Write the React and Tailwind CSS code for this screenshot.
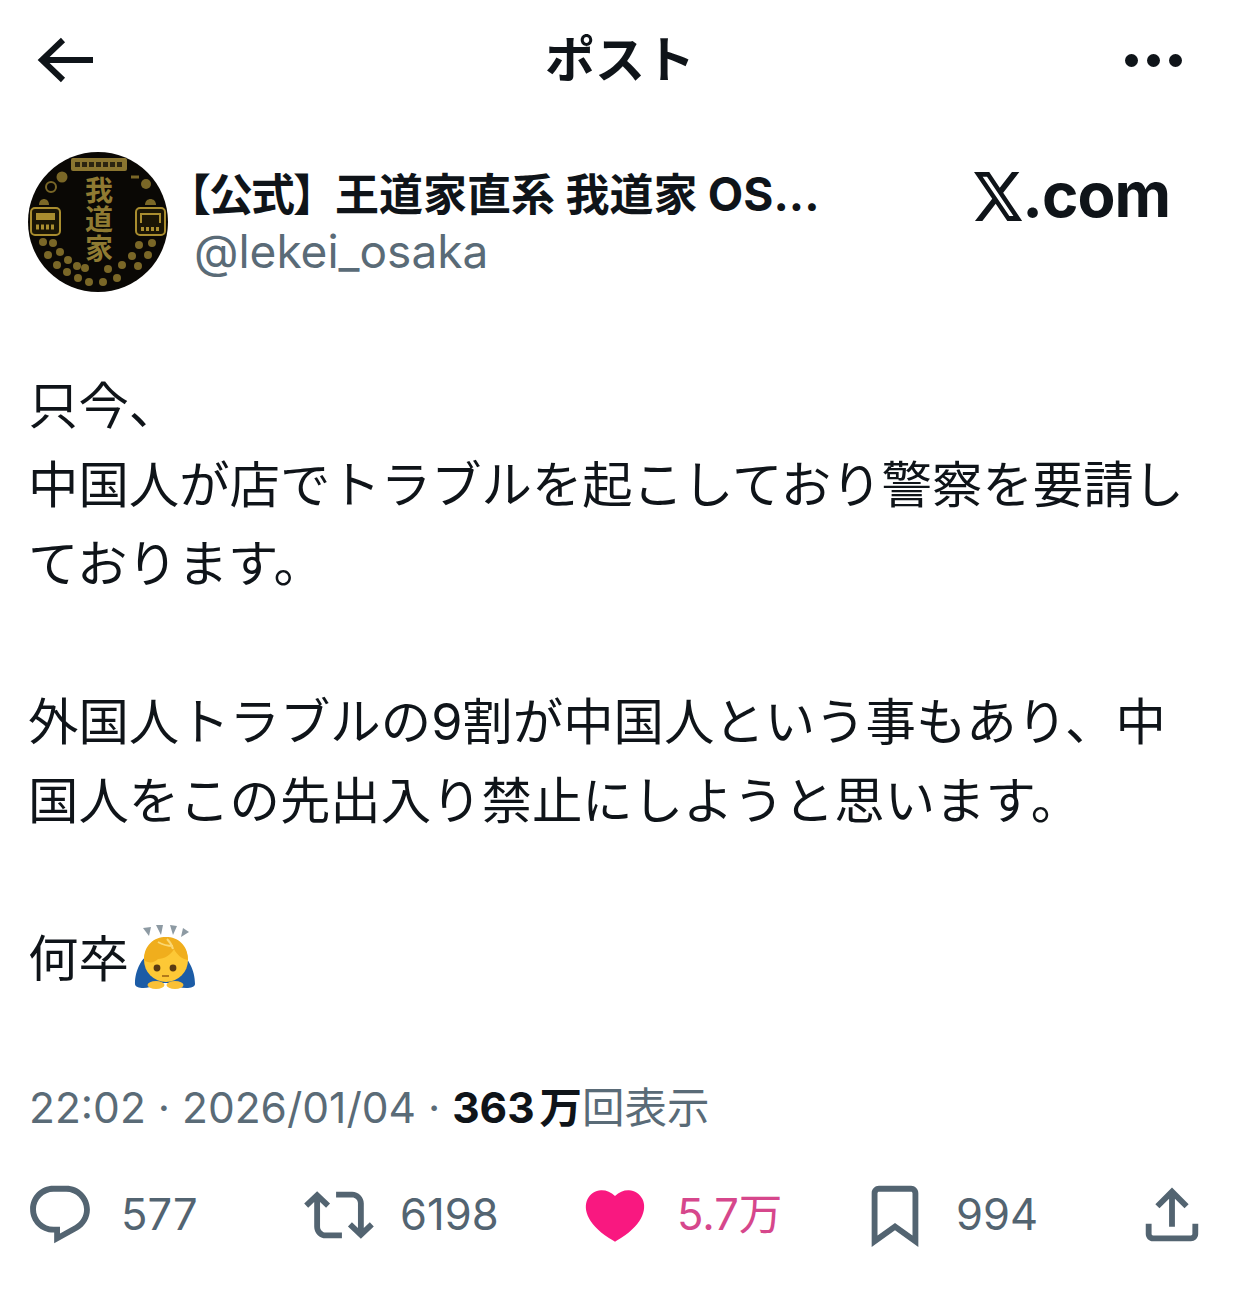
const CJK = '[font-family:Inter,"Noto_Sans_CJK_JP",sans-serif]';

function Avatar() {
  const gold = "#a98d2f";
  const dim = "#7a6727";
  const beads = [
    [15, 90], [25, 91], [20, 103], [32, 100], [29, 113], [40, 108], [49, 114], [57, 116], [39, 120], [50, 126], [61, 130],
    [75, 130], [89, 126], [80, 117], [94, 113], [110, 114], [104, 104], [120, 103], [111, 93], [124, 91],
  ];
  return (
    <svg width="140" height="140" viewBox="0 0 140 140" className="shrink-0">
      <circle cx="70" cy="70" r="70" fill="#0a0805" />
      <rect x="43" y="6" width="56" height="13" rx="2" fill="#8a7530" />
      <path d="M47 12.5h48" stroke="#2b2410" strokeWidth="5" strokeDasharray="5 2" />
      <text x="71" y="24" writingMode="vertical-rl" letterSpacing="1" fontSize="28" fontWeight="700" fill="#8f7a32" fontFamily='"Noto Sans CJK JP",serif'>我道家</text>
      <rect x="3" y="56" width="29" height="27" rx="4" fill="#1a1505" stroke={gold} strokeWidth="2" />
      <rect x="8" y="61" width="19" height="7" fill={gold} />
      <path d="M8 75h19" stroke={gold} strokeWidth="5" strokeDasharray="3 2" />
      <path d="M11 53c0-8 10-8 10 0z" fill={dim} />
      <rect x="108" y="56" width="29" height="27" rx="4" fill="#1a1505" stroke={gold} strokeWidth="2" />
      <path d="M113 71v-9h19v9" fill="none" stroke={gold} strokeWidth="2" />
      <path d="M113 77h19" stroke={gold} strokeWidth="4" strokeDasharray="3 2" />
      <path d="M117 53c0-8 11-8 11 0z" fill={dim} />
      <circle cx="23" cy="35" r="5" fill="none" stroke={dim} strokeWidth="2" />
      <circle cx="34" cy="25" r="5.5" fill={dim} />
      <path d="M103 25h8" stroke={dim} strokeWidth="3" />
      <circle cx="118" cy="32" r="5" fill={dim} />
      {beads.map(([x, y], i) => (
        <circle key={i} cx={x} cy={y} r="4" fill={dim} />
      ))}
    </svg>
  );
}

function BowEmoji() {
  return (
    <svg width="62" height="66" viewBox="0 0 62 66" className="inline-block align-[-13px] ml-[5px]">
      <path d="M9 4l8-1-2 9zM22 1l7 0-2 10zM36 1l7 1-4 9zM49 4l6 4-8 5z" fill="#8d9aa3" />
      <path d="M1 60c0-14 7-27 15-30h30c8 3 15 16 15 30 0 4-9 5-16 3l-6-4H22l-6 4c-6 2-15 1-15-3z" fill="#1c5ca6" />
      <circle cx="32" cy="36" r="22" fill="#fdc836" />
      <path d="M10 36c0-15 10-23 22-23 12 0 22 8 22 23-6-1-11-5-14-11-3 6-10 10-16 10-3 3-7 4-10 3-1 0-3-1-4-2z" fill="#f0ae1d" />
      <path d="M24 18c5 3 10 4 15 4M33 15c3 3 5 6 6 10" stroke="#fbd873" strokeWidth="2" fill="none" />
      <circle cx="23" cy="44" r="3.4" fill="#5a3a12" />
      <circle cx="39" cy="44" r="3.4" fill="#5a3a12" />
      <path d="M28 52h7" stroke="#b37a1a" strokeWidth="2" />
      <ellipse cx="22" cy="61" rx="8.5" ry="4" fill="#fac036" />
      <ellipse cx="41" cy="61" rx="8.5" ry="4" fill="#fac036" />
    </svg>
  );
}

function Stat({ d, children, color = "text-[#536471]", fill = "#536471", gap = "gap-[26px]" }) {
  return (
    <div className={`flex items-center ${gap}`}>
      <svg viewBox="0 0 24 24" className="w-[70px] h-[70px] shrink-0" fill={fill}>
        <path d={d} />
      </svg>
      {children && <span className={`${color} text-[43.5px] leading-none`}>{children}</span>}
    </div>
  );
}

export default function App() {
  return (
    <div className={`w-[1242px] h-[1315px] bg-white overflow-hidden text-[#0f1419] ${CJK}`}>
      <header className="h-[120px] pl-[36px] pr-[60px] flex items-center justify-between">
        <svg width="57" height="48" viewBox="0 0 57 48" fill="none" stroke="#0f1419" strokeWidth="6">
          <path d="M27 4L6 24l21 20M6 24h51" />
        </svg>
        <h1 className="text-[50px] font-bold leading-none ml-[22px]">ポスト</h1>
        <div className="flex gap-[9px]">
          <span className="w-[13px] h-[13px] rounded-full bg-[#0f1419]" />
          <span className="w-[13px] h-[13px] rounded-full bg-[#0f1419]" />
          <span className="w-[13px] h-[13px] rounded-full bg-[#0f1419]" />
        </div>
      </header>

      <section className="mt-[32px] pl-[28px] pr-[72px] flex items-center">
        <Avatar />
        <div className="flex-1 min-w-0">
          <div className="text-[44px] font-bold leading-[56px] whitespace-nowrap -ml-[1px]">
            <span className="tracking-[-2px]">【公式】</span>王道家直系 我道家 <span className="text-[46px]">OS...</span>
          </div>
          <div className="text-[46px] leading-[56px] text-[#5a6b77] ml-[26px]">@lekei_osaka</div>
        </div>
        <div className="flex items-center self-start mt-[14px]">
          <svg width="48" height="49" viewBox="1.25 2.25 21.5 19.5" preserveAspectRatio="none" fill="#0f1419">
            <path d="M18.244 2.25h3.308l-7.227 8.26 8.502 11.24H16.17l-5.214-6.817L4.99 21.75H1.68l7.73-8.835L1.254 2.25H8.08l4.713 6.231zm-1.161 17.52h1.833L7.084 4.126H5.117z" />
          </svg>
          <span className="text-[62px] font-bold leading-none tracking-[-1px] -mt-[2px]">.com</span>
        </div>
      </section>

      <main className="mt-[74px] pl-[28px] max-w-[1200px] text-[50.4px] leading-[79px] whitespace-pre-line">
        {"只今、\n中国人が店でトラブルを起こしており警察を要請しております。\n\n外国人トラブルの9割が中国人という事もあり、中国人をこの先出入り禁止にしようと思います。\n\n何卒"}
        <BowEmoji />
      </main>

      <div className="mt-[82px] pl-[29px] text-[42.5px] leading-[56px] text-[#5a6b77] whitespace-nowrap">
        22:02 · 2026/01/04 · <span className="font-bold text-[#0f1419]">363<span className="ml-[5px]">万</span></span>回表示
      </div>

      <footer className="mt-[44px] pl-[25px] grid grid-cols-[279px_276px_280px_277px_70px] items-center">
        <Stat d="M1.751 10c0-4.42 3.584-8 8.005-8h4.366c4.49 0 8.129 3.64 8.129 8.13 0 2.96-1.607 5.68-4.196 7.11l-8.054 4.46v-3.69h-.067c-4.49.1-8.183-3.51-8.183-8.01zm8.005-6c-3.317 0-6.005 2.69-6.005 6 0 3.37 2.77 6.08 6.138 6.01l.351-.01h1.761v2.3l5.087-2.81c1.951-1.08 3.163-3.13 3.163-5.36 0-3.39-2.744-6.13-6.129-6.13H9.756z">577</Stat>
        <Stat d="M4.5 3.88l4.432 4.14-1.364 1.46L5.5 7.55V16c0 1.1.896 2 2 2H13v2H7.5c-2.209 0-4-1.79-4-4V7.55L1.432 9.48.068 8.02 4.5 3.88zM16.5 6H11V4h5.5c2.209 0 4 1.79 4 4v8.45l2.068-1.93 1.364 1.46-4.432 4.14-4.432-4.14 1.364-1.46 2.068 1.93V8c0-1.1-.896-2-2-2z">6198</Stat>
        <Stat color="text-[#d6478c]" fill="#f91880" gap="gap-[27px]" d="M20.884 13.19c-1.351 2.48-4.001 5.12-8.379 7.67l-.503.3-.504-.3c-4.379-2.55-7.029-5.19-8.382-7.67-1.36-2.5-1.41-4.86-.514-6.67.887-1.79 2.647-2.91 4.601-3.01 1.651-.09 3.368.56 4.798 2.01 1.429-1.45 3.146-2.1 4.796-2.01 1.954.1 3.714 1.22 4.601 3.01.896 1.81.846 4.17-.514 6.67z">5.7万</Stat>
        <Stat d="M4 4.5C4 3.12 5.119 2 6.5 2h11C18.881 2 20 3.12 20 4.5v18.44l-8-5.71-8 5.71V4.5zM6.5 4c-.276 0-.5.22-.5.5v14.56l6-4.29 6 4.29V4.5c0-.28-.224-.5-.5-.5h-11z">994</Stat>
        <Stat d="M12 2.59l5.7 5.7-1.41 1.42L13 6.41V16h-2V6.41l-3.3 3.3-1.41-1.42L12 2.59zM21 15l-.02 3.51c0 1.38-1.12 2.49-2.5 2.49H5.5C4.11 21 3 19.88 3 18.5V15h2v3.5c0 .28.22.5.5.5h12.98c.28 0 .5-.22.5-.5L19 15h2z" />
      </footer>
    </div>
  );
}
